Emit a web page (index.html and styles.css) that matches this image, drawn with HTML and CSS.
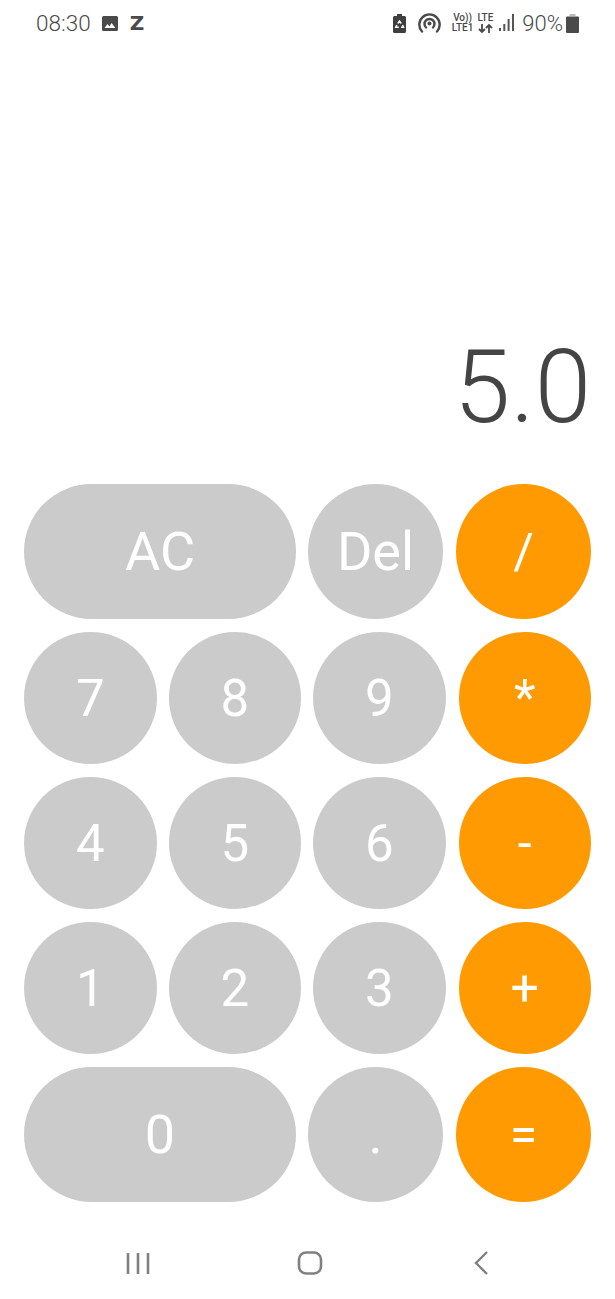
FILE: index.html
```html
<!DOCTYPE html>
<html lang="en">
  <head>
    <meta charset="UTF-8" />
    <title>Calculator</title>
    <link rel="stylesheet" href="styles.css">
  </head>
  <body>
    <div class="status-bar">
      <div class="status-left">
        <span class="clock">08:30</span>
        <svg class="icon-gallery" width="16" height="15" viewBox="0 0 16 15">
          <path fill="#4a4a4a" d="M1.500 0h13A1.500 1.500 0 0 1 16 1.500v12a1.500 1.500 0 0 1-1.500 1.500h-13A1.500 1.500 0 0 1 0 13.500v-12A1.500 1.500 0 0 1 1.500 0z"/>
          <path fill="#fff" d="M2.500 12l3-4 2 2.500 2-3.500 4 5z"/>
        </svg>
        <span class="z-mark">Z</span>
      </div>
      <div class="status-right">
        <svg class="icon-recycle" width="13" height="19" viewBox="0 0 13 19">
          <path fill="#3f3f3f" d="M4 0h5v2h2.500A1.500 1.500 0 0 1 13 3.500v14a1.500 1.500 0 0 1-1.500 1.500h-10A1.500 1.500 0 0 1 0 17.500v-14A1.500 1.500 0 0 1 1.500 2H4z"/>
          <path fill="none" stroke="#fff" stroke-width="1.500" d="M4.800 9.500L6.500 7l1.700 2.500M9.500 11l1 2.200H8M3.800 11l-1 2.200h3"/>
        </svg>
        <svg class="icon-hotspot" width="23" height="20" viewBox="0 0 23 20">
          <g fill="none" stroke="#4a4a4a" stroke-width="2.400" stroke-linecap="round">
            <path d="M4 18.500A10.200 10.200 0 1 1 19 18.500"/>
            <path d="M8 14.500A5 5 0 1 1 15 14.500"/>
          </g>
          <circle cx="11.500" cy="10.500" r="2" fill="#4a4a4a"/>
        </svg>
        <div class="net-label">
          <span>Vo))</span>
          <span>LTE1</span>
        </div>
        <div class="net-label">
          <span>LTE</span>
          <svg class="icon-arrows" width="15" height="9" viewBox="0 0 15 9">
            <path fill="none" stroke="#4a4a4a" stroke-width="1.800" d="M4 0v8M1 5l3 3 3-3M11 9V1M8 4l3-3 3 3"/>
          </svg>
        </div>
        <svg class="icon-signal" width="15" height="18" viewBox="0 0 15 18">
          <g fill="#555">
            <rect x="0" y="14" width="2" height="3"/>
            <rect x="4.300" y="10" width="2" height="7"/>
            <rect x="8.600" y="5" width="2" height="12"/>
            <rect x="13" y="0" width="2" height="17"/>
          </g>
        </svg>
        <span class="battery-text">90%</span>
        <svg class="icon-battery" width="13" height="19" viewBox="0 0 13 19">
          <path fill="#bbb" d="M3.500 0h6v2h-6z"/>
          <path fill="#4a4a4a" d="M1 2.500h11a1 1 0 0 1 1 1V18a1 1 0 0 1-1 1H1a1 1 0 0 1-1-1V3.500a1 1 0 0 1 1-1z"/>
        </svg>
      </div>
    </div>

    <div class="display">5.0</div>

    <div class="keypad">
      <div class="row">
        <button class="key wide">AC</button>
        <button class="key big">Del</button>
        <button class="key big op">/</button>
      </div>
      <div class="row">
        <button class="key">7</button>
        <button class="key">8</button>
        <button class="key">9</button>
        <button class="key op">*</button>
      </div>
      <div class="row">
        <button class="key">4</button>
        <button class="key">5</button>
        <button class="key">6</button>
        <button class="key op">-</button>
      </div>
      <div class="row">
        <button class="key">1</button>
        <button class="key">2</button>
        <button class="key">3</button>
        <button class="key op">+</button>
      </div>
      <div class="row">
        <button class="key wide">0</button>
        <button class="key big">.</button>
        <button class="key big op">=</button>
      </div>
    </div>

    <div class="nav-bar">
      <svg width="24" height="24" viewBox="0 0 24 24">
        <path fill="none" stroke="#808080" stroke-width="2.600" d="M2 2v21M12 2v21M22 2v21"/>
      </svg>
      <svg class="icon-home" width="26" height="26" viewBox="0 0 26 26">
        <rect x="2" y="2.500" width="22" height="21" rx="7" fill="none" stroke="#808080" stroke-width="2.600"/>
      </svg>
      <svg width="16" height="26" viewBox="0 0 16 26">
        <path fill="none" stroke="#808080" stroke-width="2.400" d="M14 2L3 13l11 11"/>
      </svg>
    </div>
  </body>
</html>
```

FILE: styles.css
```css
body {
  font-family: Roboto, "Liberation Sans", sans-serif;
  margin: 0;
  width: 615px;
  height: 1299px;
  background-color: #fff;
  overflow: hidden;
}
.status-bar {
  display: flex;
  justify-content: space-between;
  align-items: center;
  height: 46px;
  padding: 0 36px 0 36px;
  color: #4a4a4a;
}
.status-left {
  display: flex;
  align-items: center;
}
.clock {
  font-size: 22.500px;
  font-weight: 300;
  margin-right: 11px;
}
.z-mark {
  font-family: "DejaVu Sans", sans-serif;
  font-size: 20px;
  font-weight: 700;
  margin-left: 12px;
}
.status-right {
  display: flex;
  align-items: center;
}
.icon-recycle {
  margin-right: 12px;
}
.icon-hotspot {
  margin-right: 11px;
}
.net-label {
  display: flex;
  flex-direction: column;
  align-items: center;
  font-size: 10px;
  line-height: 10px;
  font-weight: 500;
  margin-right: 4px;
}
.icon-arrows {
  margin-top: 1px;
}
.icon-signal {
  margin: 0 8px 0 2px;
}
.battery-text {
  font-size: 22px;
  font-weight: 300;
  margin-right: 3px;
}
.display {
  height: 438px;
  padding: 0 24px 35px 0;
  box-sizing: border-box;
  display: flex;
  justify-content: flex-end;
  align-items: flex-end;
  font-size: 101.500px;
  line-height: 122px;
  font-weight: 300;
  color: #444;
}
.keypad {
  display: flex;
  flex-direction: column;
  gap: 13px;
  padding: 0 24px;
}
.row {
  display: flex;
  gap: 12px;
}
.key {
  flex: none;
  width: 132.500px;
  height: 132px;
  border: none;
  border-radius: 50%;
  padding: 0;
  background-color: #cbcbcb;
  color: #fff;
  font-family: inherit;
  font-size: 51px;
}
.big {
  width: 135px;
  height: 135px;
  font-size: 54px;
}
.wide {
  width: 272px;
  height: 135px;
  border-radius: 68px;
  font-size: 54px;
}
.op {
  margin-left: auto;
  background-color: #ff9a03;
  font-size: 50px;
}
.nav-bar {
  display: flex;
  justify-content: space-between;
  align-items: center;
  padding: 48px 126px 0 126px;
}
.icon-home {
  margin-right: 4px;
}
```
